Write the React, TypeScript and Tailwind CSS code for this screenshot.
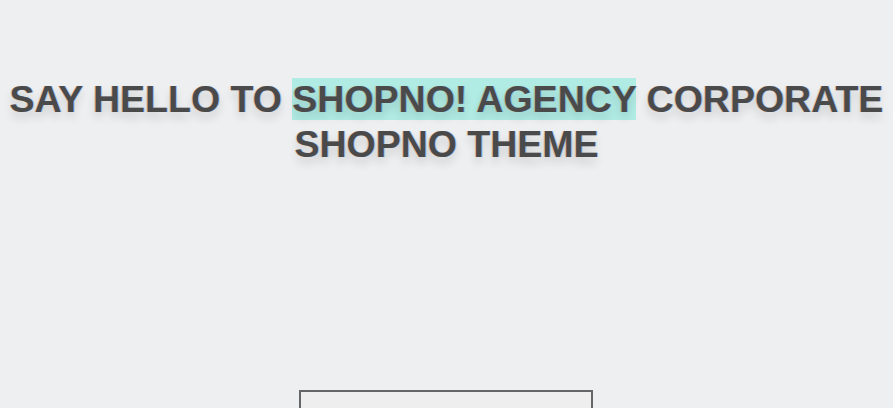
export default function App() {
  return (
    <div className="w-[893px] h-[408px] overflow-hidden bg-[#eeeff1] flex flex-col items-center">
      <h1
        className="mt-[77px] w-full text-center text-[37.5px] leading-[45px] font-bold text-[#4a4a4a] [font-family:'Liberation_Sans',Arial,sans-serif] [text-shadow:-1px_0_0_rgba(210,110,40,0.3),1px_0_0_rgba(40,120,230,0.3),0_6px_10px_rgba(0,0,0,0.14)]"
      >
        SAY HELLO TO <span className="bg-[#b0ebe4]">SHOPNO! AGENCY</span> CORPORATE SHOPNO THEME
      </h1>
      <div className="mt-[223px] ml-[-1px] w-[294px] h-[60px] border-2 border-[#666666] bg-[#eeeeee] shrink-0" />
    </div>
  );
}
